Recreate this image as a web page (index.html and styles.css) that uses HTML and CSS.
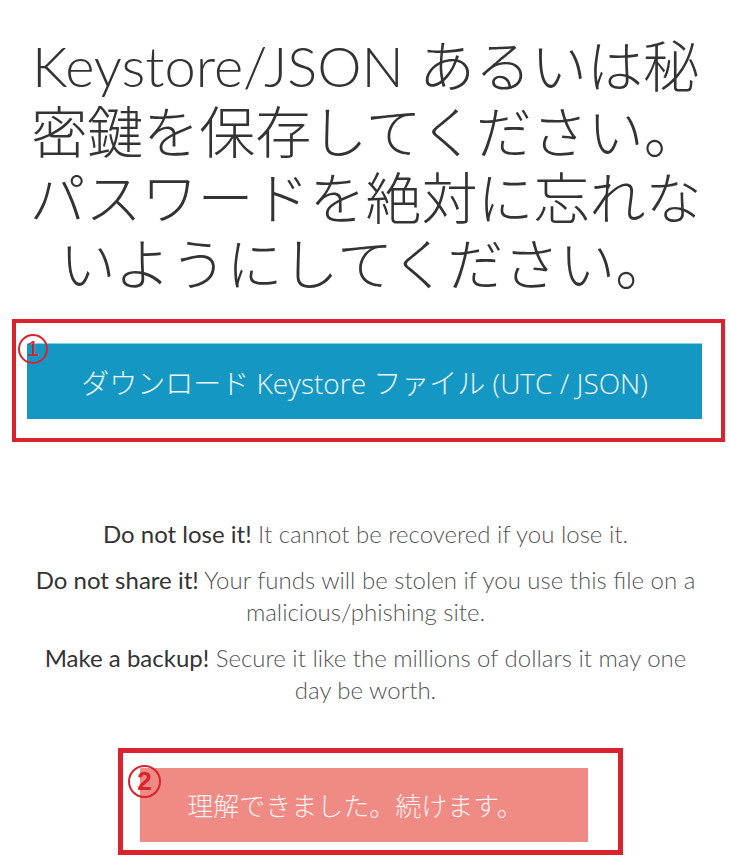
FILE: index.html
```html
<!DOCTYPE html>
<html lang="ja">
<head>
<meta charset="utf-8">
<title>Keystore</title>
<link rel="stylesheet" href="styles.css">
</head>
<body>
<main class="page">
  <h1 class="title">Keystore/JSON あるいは秘密鍵を保存してください。パスワードを絶対に忘れないようにしてください。</h1>

  <div class="mark mark-one">
    <span class="num num-one">1</span>
    <button class="btn btn-download">ダウンロード Keystore ファイル (UTC / JSON)</button>
  </div>

  <section class="notes">
    <p><strong>Do not lose it!</strong> It cannot be recovered if you lose it.</p>
    <p><strong>Do not share it!</strong> Your funds will be stolen if you use this file on a malicious/phishing site.</p>
    <p><strong>Make a backup!</strong> Secure it like the millions of dollars it may one day be worth.</p>
  </section>

  <div class="mark mark-two">
    <span class="num num-two">2</span>
    <button class="btn btn-continue">理解できました。続けます。</button>
  </div>
</main>
</body>
</html>
```
FILE: styles.css
```css
html, body {
  margin: 0;
  padding: 0;
  background: #ffffff;
}
body {
  font-family: Lato, "Noto Sans CJK JP", sans-serif;
  color: #333333;
}
.page {
  padding-top: 33px;
}
.title {
  margin: 0;
  padding: 0 16px;
  font-size: 56px;
  line-height: 66px;
  font-weight: 300;
  text-align: center;
  color: #333333;
}
.mark {
  position: relative;
  box-sizing: border-box;
  border: 4px solid #d9232e;
}
.mark-one {
  margin: 22px 6px 0 12px;
  padding: 20px 19px 19px 11px;
}
.mark-two {
  width: 505px;
  margin: 42px 0 0 118px;
  padding: 15px 30px 8px 17px;
  border-width: 5px;
}
.num {
  position: absolute;
  box-sizing: border-box;
  display: flex;
  align-items: center;
  justify-content: center;
  border-radius: 50%;
  color: #d9232e;
  font-family: "Liberation Sans", sans-serif;
}
.num-one {
  left: 2px;
  top: 11px;
  width: 30px;
  height: 30px;
  border: 2px solid #d9232e;
  font-size: 22px;
}
.num-two {
  left: 5px;
  top: 12px;
  width: 33px;
  height: 33px;
  border: 2px solid #d9232e;
  font-size: 26px;
  font-weight: bold;
}
.btn {
  display: block;
  width: 100%;
  border: 0;
  margin: 0;
  padding: 0;
  font-family: "Open Sans", "Noto Sans CJK JP", sans-serif;
  font-weight: 300;
  color: #ffffff;
  cursor: pointer;
}
.btn-download {
  height: 76px;
  background: #1597c3;
  border-top: 1px solid #7fd0ea;
  color: #eef8fc;
  font-size: 28px;
}
.btn-continue {
  height: 74px;
  padding-right: 18px;
  background: #f08a84;
  color: #fdf1f0;
  font-size: 26px;
}
.notes {
  margin-top: 76px;
  padding: 0 25px;
  text-align: center;
  font-size: 24px;
  line-height: 32px;
  color: #555555;
  font-weight: 300;
}
.notes p {
  margin: 0 0 14px;
}
.notes p:last-child {
  margin-bottom: 0;
}
.notes strong {
  font-weight: 400;
  color: #333333;
}
```
